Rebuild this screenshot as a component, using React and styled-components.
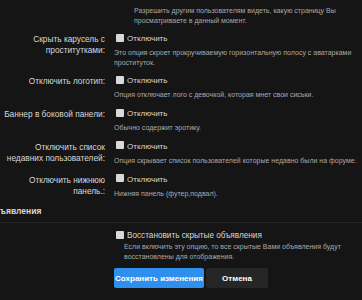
import React from 'react';
import styled, { createGlobalStyle } from 'styled-components';

const colors = {
  BG: '#151515',
  LABEL: '#d8d8d8',
  TEXT: '#c8c8c8',
  HINT: '#a9a9a9',
  LINE: '#262626',
  BLUE: '#2f8fee',
  DARK_BTN: '#262626',
};

const LABEL_WIDTH = 105;

const GlobalStyle = createGlobalStyle`
  html, body {
    margin: 0;
    padding: 0;
    background: ${colors.BG};
    overflow: hidden;
  }
  body {
    font-family: "Liberation Sans", Arial, sans-serif;
    color: ${colors.TEXT};
  }
`;

const Page = styled.div`
  width: 362px;
  height: 300px;
  overflow: hidden;
`;

const TopHint = styled.p`
  margin: 0;
  padding: 6px 20px 0 134px;
  font-size: 7px;
  line-height: 9.5px;
  color: ${colors.HINT};
`;

const Options = styled.dl`
  margin: 0;
  padding: 8px 0 0;
`;

const Row = styled.div`
  display: grid;
  grid-template-columns: ${LABEL_WIDTH}px 1fr;
  column-gap: 9px;
  margin-bottom: 8.3px;
`;

const Label = styled.dt`
  margin: 0;
  text-align: right;
  font-size: 8.3px;
  line-height: 11px;
  color: ${colors.LABEL};
  padding-top: 1px;
`;

const Control = styled.dd`
  margin: 0;
`;

const CheckLine = styled.label`
  display: flex;
  align-items: center;
  gap: 3px;
  font-size: ${props => props.size || 8}px;
  line-height: 11px;
  color: ${colors.LABEL};
  padding-left: 2px;
`;

const Box = styled.span`
  display: inline-block;
  width: 8px;
  height: 8px;
  background: #d9d9d9;
  border-radius: 1px;
  flex: none;
  margin-top: -2px;
`;

const Explain = styled.p`
  margin: 4px 0 0;
  font-size: 7px;
  line-height: 9.5px;
  color: ${colors.HINT};
`;

const SectionHead = styled.h3`
  margin: 6px 0 0 -12px;
  padding-bottom: 5px;
  font-size: 8.5px;
  line-height: 11px;
  font-weight: bold;
  color: ${colors.LABEL};
  border-bottom: 1px solid ${colors.LINE};
`;

const Restore = styled.div`
  padding: 7px 10px 0 114px;
`;

const RestoreExplain = styled(Explain)`
  margin-top: 1px;
  padding-left: 10px;
`;

const Buttons = styled.div`
  display: flex;
  gap: 2px;
  padding: 7px 0 0 114px;
`;

const Button = styled.button`
  height: 20px;
  border: 0;
  border-radius: 2px;
  font-family: "Liberation Sans", Arial, sans-serif;
  font-size: 8px;
  font-weight: bold;
  color: #fff;
  padding: 0;
  width: ${props => props.w}px;
  background: ${props => (props.primary ? colors.BLUE : colors.DARK_BTN)};
`;

const options = [
  {
    label: ['Скрыть карусель с', 'проститутками:'],
    text: 'Это опция скроет прокручиваемую горизонтальную полосу с аватарками проституток.',
  },
  {
    label: ['Отключить логотип:'],
    text: 'Опция отключает лого с девочкой, которая мнет свои сиськи.',
  },
  {
    label: ['Баннер в боковой панели:'],
    text: 'Обычно содержит эротику.',
  },
  {
    label: ['Отключить список', 'недавних пользователей:'],
    text: 'Опция скрывает список пользователей которые недавно были на форуме.',
  },
  {
    label: ['Отключить нижнюю', 'панель.:'],
    text: 'Нижняя панель (футер,подвал).',
  },
];

export default function App() {
  return (
    <Page>
      <GlobalStyle />
      <TopHint>
        Разрешить другим пользователям видеть, какую страницу Вы просматриваете в данный момент.
      </TopHint>
      <Options>
        {options.map((o, i) => (
          <Row key={i}>
            <Label>
              {o.label.map((l, j) => (
                <div key={j}>{l}</div>
              ))}
            </Label>
            <Control>
              <CheckLine>
                <Box />
                Отключить
              </CheckLine>
              <Explain>{o.text}</Explain>
            </Control>
          </Row>
        ))}
      </Options>
      <SectionHead>Объявления</SectionHead>
      <Restore>
        <CheckLine size={8.2}>
          <Box />
          Восстановить скрытые объявления
        </CheckLine>
        <RestoreExplain>
          Если включить эту опцию, то все скрытые Вами объявления будут восстановлены для отображения.
        </RestoreExplain>
      </Restore>
      <Buttons>
        <Button primary w={90}>Сохранить изменения</Button>
        <Button w={62}>Отмена</Button>
      </Buttons>
    </Page>
  );
}
